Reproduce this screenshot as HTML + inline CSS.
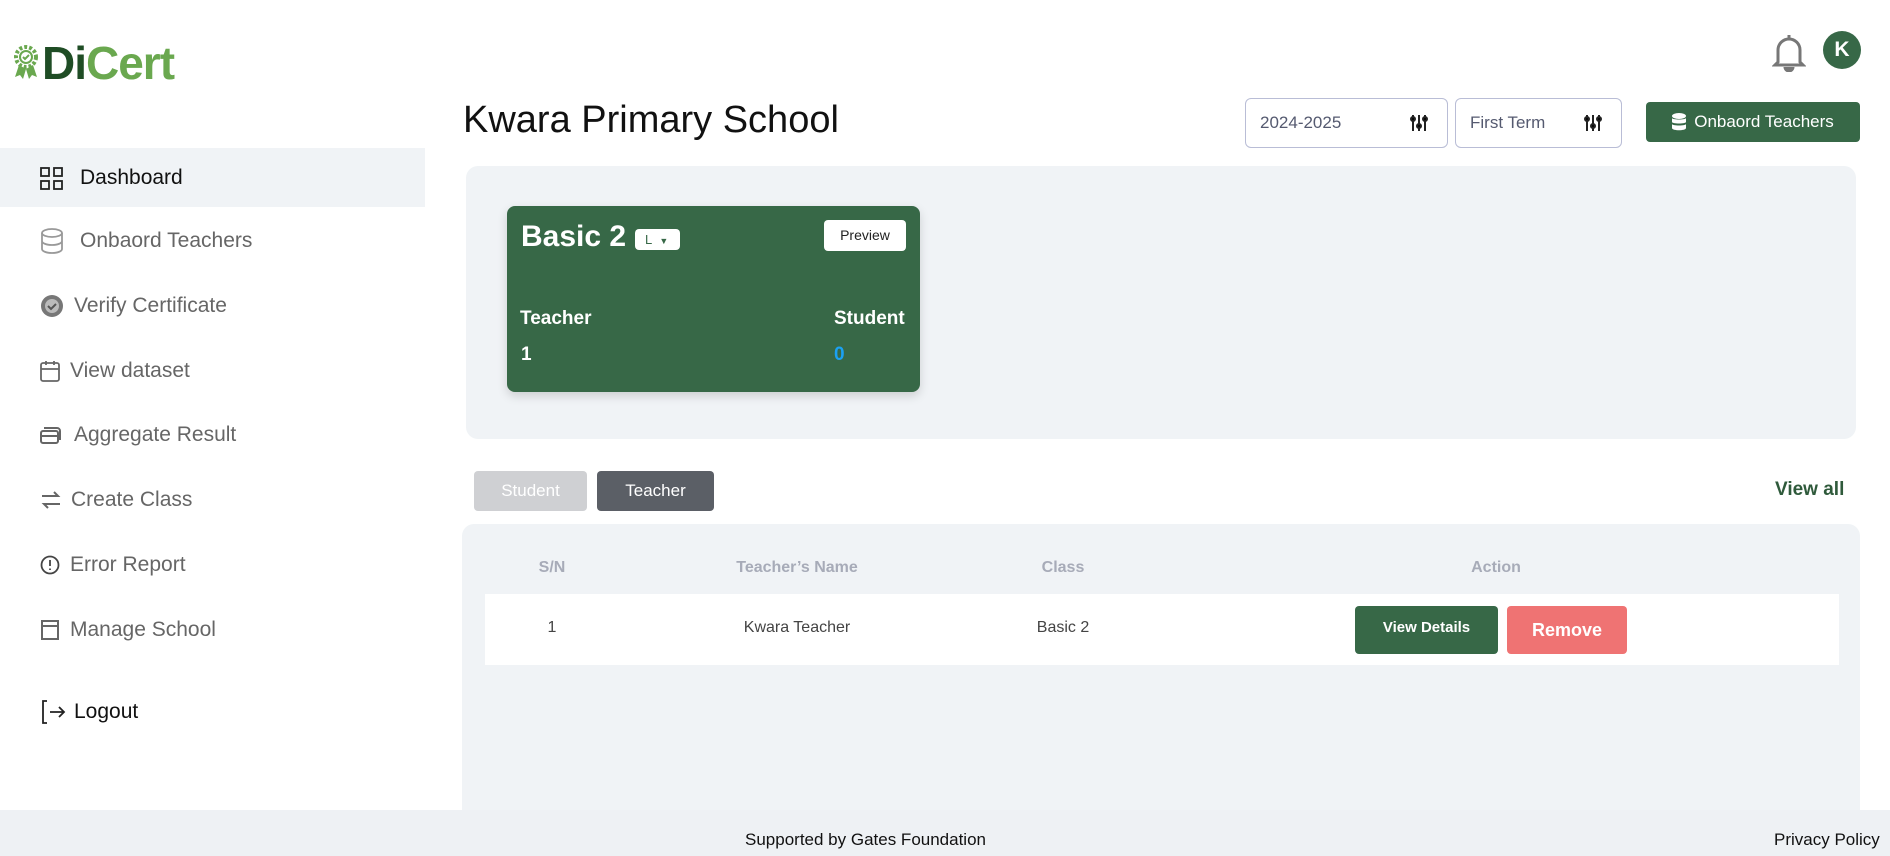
<!DOCTYPE html>
<html><head><meta charset="utf-8"><style>
*{margin:0;padding:0;box-sizing:border-box}
body{width:1890px;height:856px;position:relative;overflow:hidden;background:#fff;font-family:"Liberation Sans",sans-serif;color:#333}
.a{position:absolute}
.nav{position:absolute;left:0;width:425px;height:60px;display:flex;align-items:center;font-size:21px;color:#666}
.nav svg{position:absolute;left:40px}
.nav span{position:absolute;left:80px}
.sel{position:absolute;top:98px;height:50px;border:1px solid #b9bdd6;border-radius:6px;font-size:17px;color:#555a70;display:flex;align-items:center;padding-left:14px}
.sel svg{position:absolute;right:18px}
.th{position:absolute;top:559px;font-size:16px;font-weight:bold;color:#a7abb8;transform:translateX(-50%)}
.td{position:absolute;top:619px;font-size:16px;color:#444;transform:translateX(-50%)}
</style></head><body>
<svg class="a" style="left:12px;top:44px" width="28" height="36" viewBox="0 0 28 36"><circle cx="14" cy="13" r="10" fill="none" stroke="#6aa84f" stroke-width="4" stroke-dasharray="3 2"/><circle cx="14" cy="13" r="6" fill="#fff" stroke="#6aa84f" stroke-width="2"/><path d="M11 13l2 2 4-4" stroke="#6aa84f" stroke-width="2" fill="none"/><path d="M7 21l-4 12 5-2 3 4 3-10M21 21l4 12-5-2-3 4-3-10" fill="#6aa84f"/></svg>
<div class="a" style="left:42px;top:36px;font-size:46px;font-weight:bold;letter-spacing:-1px"><span style="color:#1f4d25">Di</span><span style="color:#6aa84f">Cert</span></div>

<div class="a" style="left:0;top:148px;width:425px;height:59px;background:#f0f3f6"></div>
<div class="nav" style="top:148px;color:#111"><svg width="23" height="23" viewBox="0 0 23 23" fill="none" stroke="#222" stroke-width="1.8"><rect x="1" y="1" width="8" height="8"/><rect x="14" y="1" width="8" height="8"/><rect x="1" y="14" width="8" height="8"/><rect x="14" y="14" width="8" height="8"/></svg><span>Dashboard</span></div>
<div class="nav" style="top:211px"><svg width="24" height="26" viewBox="0 0 24 26" fill="none" stroke="#999" stroke-width="1.8"><ellipse cx="12" cy="5" rx="10" ry="4"/><path d="M2 5v16c0 2 4 4 10 4s10-2 10-4V5M2 13c0 2 4 4 10 4s10-2 10-4"/></svg><span>Onbaord Teachers</span></div>
<div class="nav" style="top:276px"><svg width="24" height="24" viewBox="0 0 24 24"><circle cx="12" cy="12" r="11" fill="#777"/><circle cx="12" cy="12" r="7" fill="#bbb"/><path d="M8 12l3 3 5-5" stroke="#555" stroke-width="2" fill="none"/></svg><span style="left:74px">Verify Certificate</span></div>
<div class="nav" style="top:341px"><svg width="20" height="22" viewBox="0 0 20 22" fill="none" stroke="#666" stroke-width="1.8"><rect x="1" y="3" width="18" height="18" rx="2"/><path d="M1 9h18M6 1v4M14 1v4"/></svg><span style="left:70px">View dataset</span></div>
<div class="nav" style="top:405px"><svg width="22" height="20" viewBox="0 0 22 20" fill="none" stroke="#666" stroke-width="2"><rect x="1" y="6" width="17" height="12" rx="2"/><path d="M4 3h13a3 3 0 013 3v9M1 11h17"/></svg><span style="left:74px">Aggregate Result</span></div>
<div class="nav" style="top:470px"><svg width="22" height="20" viewBox="0 0 22 20" fill="none" stroke="#666" stroke-width="2"><path d="M2 6h16l-4-4M20 14H4l4 4"/></svg><span style="left:71px">Create Class</span></div>
<div class="nav" style="top:535px"><svg width="20" height="20" viewBox="0 0 20 20" fill="none" stroke="#444" stroke-width="1.8"><circle cx="10" cy="10" r="8.5"/><path d="M10 5v6M10 13.5v1.5"/></svg><span style="left:70px">Error Report</span></div>
<div class="nav" style="top:600px"><svg width="20" height="22" viewBox="0 0 20 22" fill="none" stroke="#666" stroke-width="2"><rect x="2" y="2" width="16" height="18"/><path d="M2 7h16"/></svg><span style="left:70px">Manage School</span></div>
<div class="nav" style="top:682px;color:#111"><svg width="26" height="26" viewBox="0 0 26 26" fill="none" stroke="#222" stroke-width="1.8"><path d="M7 2H3v22h4M10 13h14M19 8l5 5-5 5"/></svg><span style="left:74px">Logout</span></div>

<svg class="a" style="left:1772px;top:32px" width="34" height="40" viewBox="0 0 34 40" fill="none" stroke="#777" stroke-width="3"><path d="M6 30V18a11 11 0 0122 0v12l3 3H3z"/><path d="M17 3v4"/><path d="M13 35a4 4 0 008 0" fill="#777"/></svg>
<div class="a" style="left:1823px;top:31px;width:38px;height:38px;border-radius:50%;background:#376847;color:#fff;font-weight:bold;font-size:21px;display:flex;align-items:center;justify-content:center">K</div>
<div class="a" style="left:463px;top:99px;font-size:38px;color:#111">Kwara Primary School</div>
<div class="sel" style="left:1245px;width:203px">2024-2025<svg width="20" height="20" viewBox="0 0 20 20" stroke="#222" stroke-width="2"><path d="M4 2v16M10 2v16M16 2v16"/><circle cx="4" cy="6" r="2"/><circle cx="10" cy="13" r="2"/><circle cx="16" cy="6" r="2"/></svg></div>
<div class="sel" style="left:1455px;width:167px">First Term<svg width="20" height="20" viewBox="0 0 20 20" stroke="#222" stroke-width="2"><path d="M4 2v16M10 2v16M16 2v16"/><circle cx="4" cy="6" r="2"/><circle cx="10" cy="13" r="2"/><circle cx="16" cy="6" r="2"/></svg></div>
<div class="a" style="left:1646px;top:102px;width:214px;height:40px;background:#376847;border-radius:4px;color:#fff;font-size:17px;display:flex;align-items:center;justify-content:center;gap:8px"><svg width="14" height="18" viewBox="0 0 14 18" fill="#fff"><ellipse cx="7" cy="3" rx="7" ry="3"/><path d="M0 5c0 2 14 2 14 0v4c0 2-14 2-14 0zM0 11c0 2 14 2 14 0v4c0 3-14 3-14 0z"/></svg>Onbaord Teachers</div>

<div class="a" style="left:466px;top:166px;width:1390px;height:273px;background:#f0f3f6;border-radius:12px"></div>
<div class="a" style="left:507px;top:206px;width:413px;height:186px;background:#376847;border-radius:8px;box-shadow:0 4px 10px rgba(0,0,0,.15);color:#fff">
<div class="a" style="left:14px;top:14px;font-size:30px;font-weight:bold">Basic 2</div>
<div class="a" style="left:128px;top:23px;width:45px;height:21px;background:#fff;border-radius:4px;color:#376847;font-size:13px;padding-left:10px;line-height:21px">L <span style="font-size:9px;margin-left:4px">▼</span></div>
<div class="a" style="left:317px;top:14px;width:82px;height:31px;background:#fff;border-radius:4px;color:#222;font-size:14px;text-align:center;line-height:31px">Preview</div>
<div class="a" style="left:13px;top:102px;font-size:19px;font-weight:bold">Teacher</div>
<div class="a" style="left:327px;top:102px;font-size:19px;font-weight:bold">Student</div>
<div class="a" style="left:14px;top:138px;font-size:19px;font-weight:bold">1</div>
<div class="a" style="left:327px;top:138px;font-size:19px;font-weight:bold;color:#1ba1f2">0</div>
</div>

<div class="a" style="left:474px;top:471px;width:113px;height:40px;background:#cfd0d3;border-radius:4px;color:#fff;font-size:17px;text-align:center;line-height:40px">Student</div>
<div class="a" style="left:597px;top:471px;width:117px;height:40px;background:#5b5f66;border-radius:4px;color:#fff;font-size:17px;text-align:center;line-height:40px">Teacher</div>
<div class="a" style="left:1775px;top:479px;font-size:19px;font-weight:bold;color:#2f5a3b">View all</div>

<div class="a" style="left:462px;top:524px;width:1398px;height:300px;background:#f0f3f6;border-radius:12px 12px 0 0"></div>
<div class="th" style="left:552px">S/N</div>
<div class="th" style="left:797px">Teacher’s Name</div>
<div class="th" style="left:1063px">Class</div>
<div class="th" style="left:1496px">Action</div>
<div class="a" style="left:485px;top:594px;width:1354px;height:71px;background:#fff"></div>
<div class="td" style="left:552px">1</div>
<div class="td" style="left:797px">Kwara Teacher</div>
<div class="td" style="left:1063px">Basic 2</div>
<div class="a" style="left:1355px;top:606px;width:143px;height:48px;background:#376847;border-radius:4px;color:#fff;font-size:15px;font-weight:bold;text-align:center;line-height:44px">View Details</div>
<div class="a" style="left:1507px;top:606px;width:120px;height:48px;background:#ef7373;border-radius:4px;color:#fff;font-size:18px;font-weight:bold;text-align:center;line-height:48px">Remove</div>

<div class="a" style="left:0;top:810px;width:1890px;height:46px;background:#eef1f4"></div>
<div class="a" style="left:745px;top:830px;font-size:17px;color:#111">Supported by Gates Foundation</div>
<div class="a" style="left:1774px;top:830px;font-size:17px;color:#111">Privacy Policy</div>
</body></html>
